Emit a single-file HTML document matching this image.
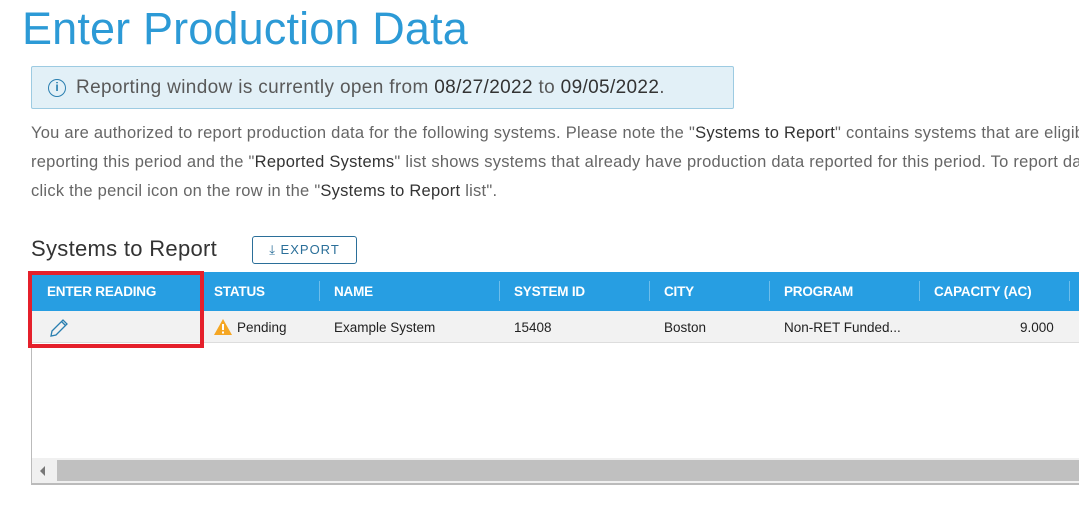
<!DOCTYPE html>
<html><head><meta charset="utf-8"><style>
*{margin:0;padding:0;box-sizing:border-box}
body{width:1079px;height:509px;overflow:hidden;background:#fff;font-family:"Liberation Sans",sans-serif;position:relative}
.a{position:absolute;white-space:nowrap}
h1{position:absolute;left:22px;top:3px;font-size:45px;font-weight:normal;color:#2c9ad6;letter-spacing:0.15px}
.alert{left:31px;top:66px;width:703px;height:43px;background:#e2f0f7;border:1px solid #9dcbe2;border-radius:2px}
.alert span.t{position:absolute;left:44px;top:10px;font-size:19px;color:#595959;letter-spacing:0.35px}
.alert b{font-weight:normal;color:#333}
.icon{position:absolute;left:16px;top:12px;width:18px;height:18px;border:1.5px solid #2a7fb0;border-radius:50%;color:#2a7fb0;font-size:12px;text-align:center;line-height:15px;font-weight:bold}
.p{left:31px;font-size:16.5px;color:#666;letter-spacing:0.25px}
.p b{font-weight:normal;color:#333}
.h2{left:31px;top:236px;font-size:22px;color:#333;letter-spacing:0.3px}
.btn{left:252px;top:236px;width:105px;height:28px;border:1px solid #2b6f99;border-radius:3px;color:#2b6f99;font-size:13px;letter-spacing:1px;text-align:center;line-height:26px}
.hdr{left:31px;top:272px;width:1048px;height:39px;background:#279ee2}
.hc{position:absolute;top:12px;color:#fff;font-weight:bold;font-size:13.5px;letter-spacing:-0.2px}
.sep{position:absolute;top:9px;width:1px;height:20px;background:#6cbdeb}
.row{left:31px;top:311px;width:1048px;height:32px;background:#f2f2f2;border-bottom:1px solid #ddd}
.rc{position:absolute;top:9px;font-size:13.5px;color:#222}
.red{left:28px;top:271px;width:176px;height:77px;border:4px solid #e5202b}
</style></head><body>
<h1>Enter Production Data</h1>
<div class="a alert"><div class="icon">i</div><span class="t">Reporting window is currently open from <b>08/27/2022</b> to <b>09/05/2022</b>.</span></div>
<div class="a p" style="top:124px">You are authorized to report production data for the following systems. Please note the "<b>Systems to Report</b>" contains systems that are eligible for</div>
<div class="a p" style="top:153px">reporting this period and the "<b>Reported Systems</b>" list shows systems that already have production data reported for this period. To report data,</div>
<div class="a p" style="top:182px">click the pencil icon on the row in the "<b>Systems to Report</b> list".</div>
<div class="a h2">Systems to Report</div>
<div class="a btn">⤓ EXPORT</div>
<div class="a hdr">
<span class="hc" style="left:16px">ENTER READING</span>
<span class="hc" style="left:183px">STATUS</span><div class="sep" style="left:288px"></div>
<span class="hc" style="left:303px">NAME</span><div class="sep" style="left:468px"></div>
<span class="hc" style="left:483px">SYSTEM ID</span><div class="sep" style="left:618px"></div>
<span class="hc" style="left:633px">CITY</span><div class="sep" style="left:738px"></div>
<span class="hc" style="left:753px">PROGRAM</span><div class="sep" style="left:888px"></div>
<span class="hc" style="left:903px">CAPACITY (AC)</span><div class="sep" style="left:1038px"></div>
</div>
<div class="a row">
<svg style="position:absolute;left:17px;top:6px" width="22" height="22" viewBox="0 0 22 22"><path d="M3 19 L4 14 L15 3 L19 7 L8 18 Z M13.5 4.5 L17.5 8.5" fill="none" stroke="#2a7fb0" stroke-width="1.3"/></svg>
<svg style="position:absolute;left:182px;top:7px" width="20" height="18" viewBox="0 0 20 18"><path d="M10 1 L19 17 L1 17 Z" fill="#f5a623"/><rect x="9" y="6" width="2" height="6" fill="#fff"/><rect x="9" y="13.5" width="2" height="2" fill="#fff"/></svg>
<span class="rc" style="left:206px">Pending</span>
<span class="rc" style="left:303px">Example System</span>
<span class="rc" style="left:483px">15408</span>
<span class="rc" style="left:633px">Boston</span>
<span class="rc" style="left:753px">Non-RET Funded...</span>
<span class="rc" style="left:989px">9.000</span>
</div>
<div class="a" style="left:31px;top:343px;width:1px;height:142px;background:#bbb"></div>
<div class="a" style="left:32px;top:458px;width:1047px;height:25px;background:#f0f0f0"></div>
<div class="a" style="left:57px;top:460px;width:1022px;height:21px;background:#c0c0c0"></div>
<div class="a" style="left:40px;top:466px;width:0;height:0;border-top:5px solid transparent;border-bottom:5px solid transparent;border-right:5px solid #777"></div>
<div class="a" style="left:31px;top:483px;width:1048px;height:2px;background:#bbb"></div>
<div class="a red"></div>
</body></html>
